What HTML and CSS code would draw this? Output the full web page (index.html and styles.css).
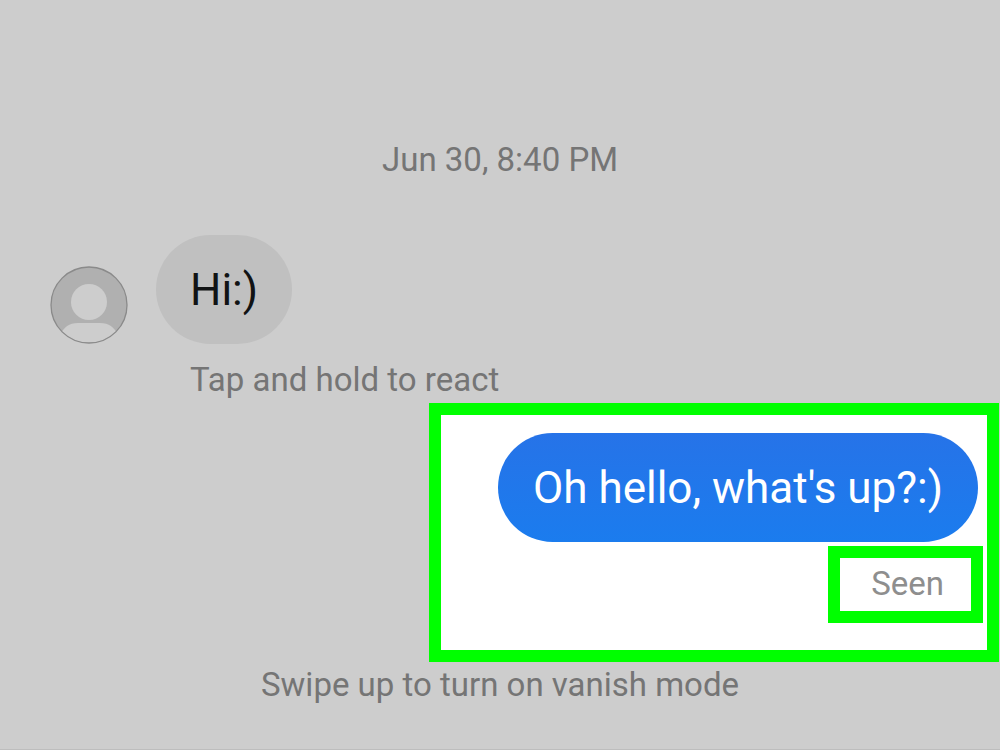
FILE: index.html
```html
<!DOCTYPE html>
<html lang="en">
<head>
<meta charset="UTF-8">
<meta name="viewport" content="width=device-width, initial-scale=1">
<title>Chat</title>

<link rel="stylesheet" href="styles.css">

</head>
<body>
	<main class="chat">
		<time class="date note">Jun 30, 8:40 PM</time>

		<!-- received message -->
		<div class="received">
			<svg class="avatar" viewBox="0 0 78 78" role="img" aria-label="Profile picture">
				<clipPath id="face"><circle cx="39" cy="39" r="38"/></clipPath>
				<circle cx="39" cy="39" r="38" fill="#b0b0b0"/>
				<circle cx="39" cy="36" r="18" fill="#cdcdcd"/>
				<path d="M10 69C14 61 19 57 28 57H50C59 57 64 61 68 69V78H10Z" fill="#cdcdcd" clip-path="url(#face)"/>
				<circle cx="39" cy="39" r="38" fill="none" stroke="#8a8a8a" stroke-width="1.3"/>
			</svg>
			<p class="bubble">Hi:)</p>
		</div>
		<p class="hint note">Tap and hold to react</p>

		<!-- sent message, highlighted -->
		<section class="highlight">
			<p class="bubble sent">Oh hello, what's up?:)</p>
			<p class="seen note">Seen</p>
		</section>

		<p class="vanish note">Swipe up to turn on vanish mode</p>
	</main>
</body>
</html>
```
FILE: styles.css
```css
* {
	box-sizing: border-box;
}

body {
	margin: 0;
	background-color: #cdcdcd;
	font-family: Roboto, "Liberation Sans", sans-serif;
}

p {
	margin: 0;
}

.chat {
	display: flex;
	flex-direction: column;
	min-height: 100vh;
	padding-top: 140px;
	border-bottom: 1px solid #bdbdbd;
}

/* small grey lines around the messages */
.note {
	font-size: 33px;
	line-height: 40px;
	color: #757575;
}

.date,
.vanish {
	text-align: center;
}

.received {
	display: flex;
	align-items: flex-end;
	gap: 28px;
	margin-top: 55px;
	padding-left: 50px;
}

.avatar {
	width: 78px;
	height: 78px;
}

.bubble {
	padding: 29px 34px 27px;
	border-radius: 55px;
	background-color: #c0c0c0;
	color: #111314;
	font-size: 44px;
	line-height: 53px;
}

.hint {
	margin-top: 16px;
	padding-left: 190px;
}

/* green frame, the right edge almost touches the window */
.highlight {
	display: flex;
	flex-direction: column;
	align-items: flex-end;
	align-self: flex-end;
	width: 57%;
	margin: 3px 1px 0 0;
	padding: 18px 4px 27px;
	border: 12px solid #00ff00;
	background-color: #ffffff;
}

.sent {
	margin-right: 5px;
	padding-left: 35px;
	padding-right: 35px;
	background: linear-gradient(#2673e8, #1b7cee);
	color: #ffffff;
}

.seen {
	margin-top: 4px;
	padding: 6px 27px 7px 31px;
	border: 12px solid #00ff00;
	color: #8e8e8e;
}

.vanish {
	margin-top: 3px;
}
```
